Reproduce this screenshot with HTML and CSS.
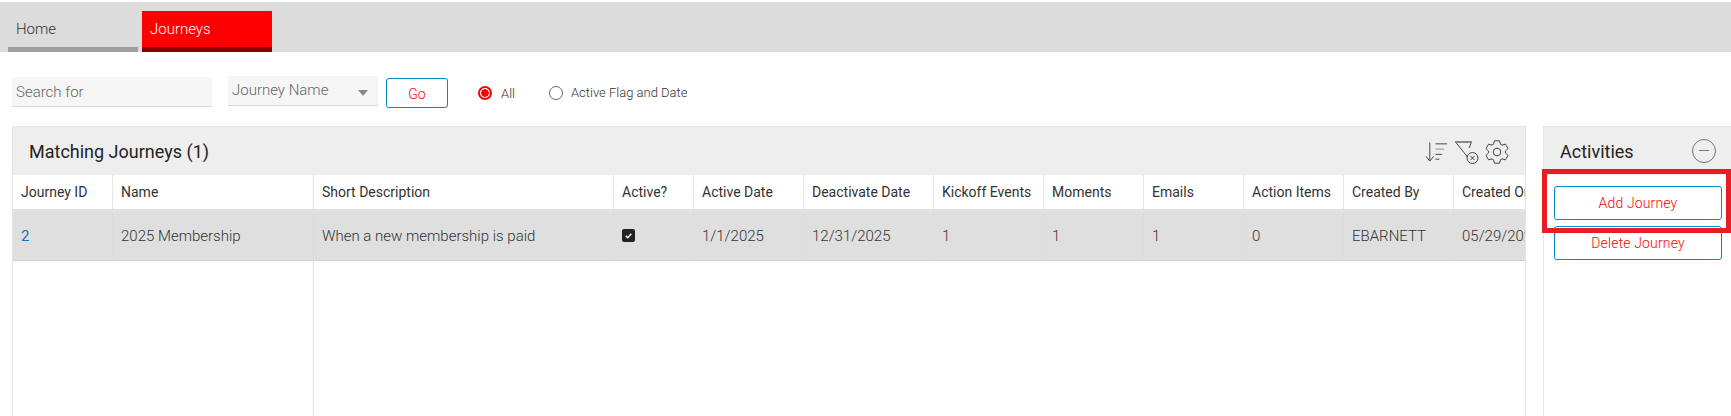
FILE: index.html
```html
<!DOCTYPE html>
<html lang="en">
<head>
<meta charset="utf-8">
<title>Journeys</title>
<link rel="stylesheet" href="styles.css">
</head>
<body>
<nav class="tabs">
  <a class="tab">Home</a>
  <a class="tab tab-active">Journeys</a>
</nav>
<form class="filters">
  <div class="search">Search for</div>
  <div class="select"><span>Journey Name</span><i class="caret"></i></div>
  <button type="button" class="btn go">Go</button>
  <label class="radio first"><i class="dot dot-on"></i>All</label>
  <label class="radio second"><i class="dot"></i>Active Flag and Date</label>
</form>
<main class="content">
  <section class="grid-panel">
    <header class="panel-head">
      <h2>Matching Journeys (1)</h2>
      <div class="tools">
        <svg class="ic-sort" viewBox="0 0 24 22" fill="none" stroke="#444" stroke-width="1"><path d="M5 1v19M1 15.500l4 5 4-5"/><path d="M11 2.500h12"/><path d="M11 8h9" stroke="#bbb" stroke-width="2"/><path d="M11 13.500h7"/><path d="M11 18.500h4"/></svg>
        <svg class="ic-filter" viewBox="0 0 25 24" fill="none" stroke="#444" stroke-width="1"><path d="M1.500 2l8.500 10.500 3.500 4.500"/><path d="M17.500 2l-2.500 6"/><path d="M1 2h17" stroke="#888" stroke-width="2"/><circle cx="18.500" cy="18" r="5.500"/><path d="M16.500 16l4 4M20.500 16l-4 4"/></svg>
        <svg class="ic-gear" viewBox="0 0 24 24" fill="none" stroke="#444" stroke-width="1" stroke-linejoin="round"><circle cx="12" cy="12" r="3.800"/><path d="M8.540 4.230L9.410.8H14.590L15.460 4.230L17 5.120L20.410 4.160L23 8.640L20.450 11.110V12.890L23 15.360L20.410 19.840L17 18.880L15.460 19.770L14.590 23.200H9.410L8.540 19.770L7 18.880L3.590 19.840L1 15.360L3.550 12.890V11.110L1 8.640L3.590 4.160L7 5.120Z"/></svg>
      </div>
    </header>
    <div class="table">
      <div class="row row-head">
        <div class="c c1">Journey ID</div><div class="c c2">Name</div><div class="c c3">Short Description</div><div class="c c4">Active?</div><div class="c c5">Active Date</div><div class="c c6">Deactivate Date</div><div class="c c7">Kickoff Events</div><div class="c c8">Moments</div><div class="c c9">Emails</div><div class="c c10">Action Items</div><div class="c c11">Created By</div><div class="c c12">Created On</div>
      </div>
      <div class="row row-data">
        <div class="c c1 link">2</div><div class="c c2">2025 Membership</div><div class="c c3">When a new membership is paid</div><div class="c c4"><span class="check"><svg viewBox="0 0 12 12" fill="none" stroke="#fff" stroke-width="1.300"><path d="M3.500 6.200l1.800 1.800 3.300-3.600"/></svg></span></div><div class="c c5">1/1/2025</div><div class="c c6">12/31/2025</div><div class="c c7">1</div><div class="c c8">1</div><div class="c c9">1</div><div class="c c10">0</div><div class="c c11">EBARNETT</div><div class="c c12">05/29/2025</div>
      </div>
      <div class="fill"><div class="fill-a"></div><div class="fill-b"></div></div>
    </div>
  </section>
  <aside class="activities">
    <header class="act-head">
      <h2>Activities</h2>
      <span class="collapse"></span>
    </header>
    <div class="act-body">
      <button type="button" class="btn act">Add Journey</button>
      <button type="button" class="btn act">Delete Journey</button>
      <div class="highlight"></div>
    </div>
  </aside>
</main>
</body>
</html>
```
FILE: styles.css
```css
* { box-sizing: border-box; }
html, body { margin: 0; height: 100%; }
body { background: #fff; font-family: Roboto, "Liberation Sans", sans-serif; color: #333; overflow: hidden; padding-top: 2px; }

.tabs { height: 50px; background: #dcdcdc; display: flex; align-items: flex-end; padding-left: 8px; gap: 4px; }
.tab { width: 130px; height: 41px; padding: 9px 8px 0; font-size: 15px; font-weight: 300; color: #333; border-bottom: 5px solid #a0a0a0; }
.tab-active { background: #f00; color: #fff; border-bottom-color: #8b0000; }

.filters { display: flex; align-items: flex-start; padding: 24px 0 0 12px; height: 74px; }
.search { width: 200px; height: 30px; margin-top: 1px; background: #f6f6f6; border-bottom: 1px solid #d8d8d8; padding: 6px 4px 0; font-size: 15px; font-weight: 300; color: #666; }
.select { width: 150px; height: 30px; margin-left: 16px; background: #f6f6f6; border-bottom: 1px solid #d8d8d8; padding: 5px 4px 0; font-size: 15px; font-weight: 300; color: #666; display: flex; justify-content: space-between; }
.caret { width: 0; height: 0; margin: 9px 6px 0 0; border: 5.500px solid transparent; border-top: 6px solid #888; border-bottom: 0; }
.btn { background: #fff; border: 1px solid #0088cc; border-radius: 3px; color: #f00; font-family: inherit; font-size: 14px; font-weight: 300; letter-spacing: .15px; cursor: pointer; padding: 0; }
.go { width: 62px; height: 30px; margin: 2px 0 0 8px; padding-top: 2px; }
.radio { display: flex; align-items: center; height: 30px; margin-top: 2px; font-size: 13px; font-weight: 300; color: #333; }
.first { margin-left: 30px; }
.second { margin-left: 34px; margin-top: 1px; }
.dot { width: 14px; height: 14px; margin-right: 8px; border-radius: 50%; border: 1px solid #666; background: #fff; }
.first .dot { margin-right: 9px; }
.second .dot { margin-top: 2px; }
.dot-on { border: 2px solid #f00; background: radial-gradient(circle, #f00 0 3.500px, #fff 4px); }

.content { display: flex; height: 290px; padding-left: 12px; }
.grid-panel { width: 1514px; flex: none; display: flex; flex-direction: column; border-left: 1px solid #e4e4e4; border-right: 1px solid #e4e4e4; overflow: hidden; }
.panel-head { height: 49px; flex: none; background: #eee; border-top: 1px solid #e6e6e6; display: flex; align-items: center; justify-content: space-between; padding: 0 16px 0 16px; }
.panel-head h2 { margin: 0; font-size: 18px; font-weight: 400; color: #222; }
.tools { display: flex; align-items: center; gap: 6px; padding-top: 2px; }
.ic-sort { width: 23px; height: 22px; }
.ic-filter { width: 25px; height: 24px; }
.ic-gear { width: 24px; height: 24px; }

.table { flex: 1; display: flex; flex-direction: column; min-height: 0; }
.row { display: flex; flex: none; }
.row-head { height: 37px; background: #fff; border-bottom: 3px solid #e2e2e2; font-size: 14px; font-weight: 400; color: #333; }
.row-data { height: 49px; background: #dfdfdf; border-bottom: 1px solid #d2d2d2; font-size: 15px; font-weight: 300; color: #333; }
.c { flex: none; border-right: 1px solid #e6e6e6; white-space: nowrap; overflow: hidden; padding-left: 8px; display: flex; align-items: center; }
.row-data .c { border-right-color: #dcdcdc; }
.c1 { width: 100px; } .c2 { width: 201px; } .c3 { width: 300px; } .c4 { width: 80px; }
.c5 { width: 110px; } .c6 { width: 130px; } .c7 { width: 110px; } .c8 { width: 100px; }
.c9 { width: 100px; } .c10 { width: 100px; } .c11 { width: 110px; } .c12 { width: 120px; border-right: 0; }
.link { color: #0a78c2; font-weight: 400; }
.check { width: 13px; height: 13px; border-radius: 2px; background: #222; display: block; margin-bottom: 2px; }
.check svg { display: block; width: 13px; height: 13px; }
.fill { flex: 1; display: flex; }
.fill-a { width: 301px; border-right: 1px solid #e4e4e4; }

.activities { width: 188px; margin-left: 17px; flex: none; border-left: 1px solid #e4e4e4; }
.act-head { height: 49px; background: #eee; border-top: 1px solid #e6e6e6; display: flex; align-items: center; justify-content: space-between; padding: 0 15px 0 16px; }
.act-head h2 { margin: 0; font-size: 18px; font-weight: 400; color: #222; }
.collapse { width: 24px; height: 24px; border-radius: 50%; border: 1px solid #777; position: relative; }
.collapse::after { content: ""; position: absolute; left: 6px; right: 6px; top: 10px; height: 1px; background: #777; }
.act-body { position: relative; display: flex; flex-direction: column; gap: 6px; padding: 11px 9px 0 10px; }
.act { width: 100%; height: 34px; }
.highlight { position: absolute; left: -2px; top: -6px; width: 189px; height: 64px; border: 5px solid #e81c24; pointer-events: none; }
```
